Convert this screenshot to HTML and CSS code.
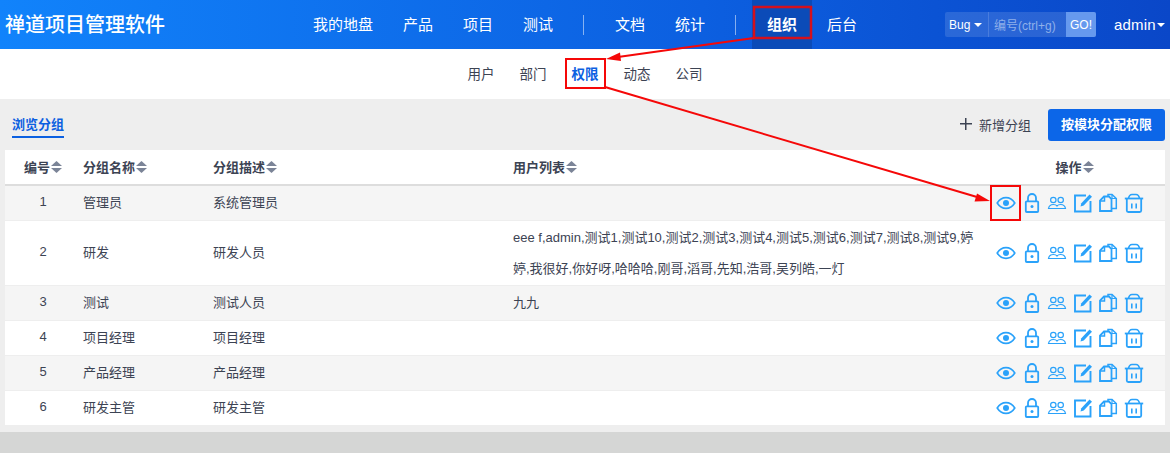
FILE: index.html
```html
<!DOCTYPE html>
<html lang="zh-CN">
<head>
<meta charset="utf-8">
<title>禅道项目管理软件</title>
<link rel="stylesheet" href="styles.css">
</head>
<body>
<svg class="defs" width="0" height="0" aria-hidden="true">
  <defs>
    <symbol id="i-eye" viewBox="0 0 20 20"><path d="M1.200 10C3.500 6.300 6.500 4.600 10 4.600S16.500 6.300 18.800 10C16.500 13.700 13.500 15.400 10 15.400S3.500 13.700 1.200 10Z" fill="none" stroke="currentColor" stroke-width="1.600"/><circle cx="10" cy="10" r="3" fill="currentColor"/></symbol>
    <symbol id="i-lock" viewBox="0 0 20 20"><rect x="3.800" y="8.300" width="12.400" height="10.700" rx="1" fill="none" stroke="currentColor" stroke-width="1.800"/><path d="M6 8.300V5A4 4 0 0 1 14 5V8.300" fill="none" stroke="currentColor" stroke-width="1.800"/><circle cx="10" cy="13.500" r="1.500" fill="currentColor"/></symbol>
    <symbol id="i-users" viewBox="0 0 20 20"><circle cx="6.300" cy="7" r="2.700" fill="none" stroke="currentColor" stroke-width="1.200"/><circle cx="13.700" cy="7" r="2.700" fill="none" stroke="currentColor" stroke-width="1.200"/><path d="M1.500 15.500C2 12.500 3.500 11.500 6.300 11.500C8.500 11.500 9.500 12.200 10 13C10.500 12.200 11.500 11.500 13.700 11.500C16.500 11.500 18 12.500 18.500 15.500Z" fill="none" stroke="currentColor" stroke-width="1.200"/></symbol>
    <symbol id="i-edit" viewBox="0 0 20 20"><path d="M13 2.500H2V18.500H17.500V8" fill="none" stroke="currentColor" stroke-width="1.900"/><path d="M7.500 13.500L8.300 10.300L16.500 1.500L19 3.800L10.700 12.400Z" fill="currentColor"/></symbol>
    <symbol id="i-copy" viewBox="0 0 20 20"><path d="M6 3.500H11L13.500 6V18H2V7.500Z" fill="none" stroke="currentColor" stroke-width="1.800"/><path d="M6.500 3.500V8H2" fill="none" stroke="currentColor" stroke-width="1.500"/><path d="M10 3V1.500H14L18.300 5.500V15.500H14" fill="none" stroke="currentColor" stroke-width="1.500"/><path d="M14 1.500V5.500H18" fill="none" stroke="currentColor" stroke-width="1.200"/></symbol>
    <symbol id="i-trash" viewBox="0 0 20 20"><path d="M.8 5.500H19.200" stroke="currentColor" stroke-width="1.800"/><path d="M4.500 5.500C5 2.800 6.500 1.500 8 1.500H12C13.500 1.500 15 2.800 15.500 5.500" fill="none" stroke="currentColor" stroke-width="1.500"/><path d="M2.800 5.500V17.500C2.800 18.500 3.300 19 4.300 19H15.700C16.700 19 17.200 18.500 17.200 17.500V5.500" fill="none" stroke="currentColor" stroke-width="1.800"/><path d="M7.800 10.500V15.500M12.200 10.500V15.500" stroke="currentColor" stroke-width="1.600"/></symbol>
    <symbol id="i-sort" viewBox="0 0 11 12"><path d="M5.500 0L11 5H0Z" fill="currentColor"/><path d="M5.500 12L0 7H11Z" fill="currentColor"/></symbol>
  </defs>
</svg>

<header class="topbar">
  <div class="brand">禅道项目管理软件</div>
  <nav class="mainnav">
    <a class="nav-item">我的地盘</a>
    <a class="nav-item">产品</a>
    <a class="nav-item">项目</a>
    <a class="nav-item">测试</a>
    <span class="nav-divider"></span>
    <a class="nav-item">文档</a>
    <a class="nav-item">统计</a>
    <span class="nav-divider"></span>
    <a class="nav-item is-active">组织</a>
    <a class="nav-item">后台</a>
  </nav>
  <div class="search">
    <span class="search-type">Bug<i class="caret"></i></span>
    <span class="search-input">编号(ctrl+g)</span>
    <span class="search-go">GO!</span>
  </div>
  <div class="user">admin<i class="caret"></i></div>
</header>

<nav class="subnav">
  <a class="sub-item">用户</a>
  <a class="sub-item">部门</a>
  <a class="sub-item is-active">权限</a>
  <a class="sub-item">动态</a>
  <a class="sub-item">公司</a>
</nav>

<main class="content">
  <div class="toolbar">
    <a class="tab">浏览分组</a>
    <div class="actions">
      <a class="add"><span class="plus"></span>新增分组</a>
      <a class="primary">按模块分配权限</a>
    </div>
  </div>
  <table class="grid">
    <colgroup>
      <col class="c-id"><col class="c-name"><col class="c-desc"><col class="c-users"><col class="c-ops">
    </colgroup>
    <thead>
      <tr>
        <th class="center">编号<svg class="sort"><use href="#i-sort"/></svg></th>
        <th class="name">分组名称<svg class="sort"><use href="#i-sort"/></svg></th>
        <th>分组描述<svg class="sort"><use href="#i-sort"/></svg></th>
        <th>用户列表<svg class="sort"><use href="#i-sort"/></svg></th>
        <th class="ops-head">操作<svg class="sort"><use href="#i-sort"/></svg></th>
      </tr>
    </thead>
    <tbody>
      <tr class="odd">
        <td class="center">1</td><td class="name">管理员</td><td>系统管理员</td><td></td>
        <td><div class="ops"><svg class="ico"><use href="#i-eye"/></svg><svg class="ico"><use href="#i-lock"/></svg><svg class="ico"><use href="#i-users"/></svg><svg class="ico"><use href="#i-edit"/></svg><svg class="ico"><use href="#i-copy"/></svg><svg class="ico"><use href="#i-trash"/></svg></div></td>
      </tr>
      <tr>
        <td class="center">2</td><td class="name">研发</td><td>研发人员</td>
        <td class="users">eee f,admin,测试1,测试10,测试2,测试3,测试4,测试5,测试6,测试7,测试8,测试9,婷婷,我很好,你好呀,哈哈哈,刚哥,滔哥,先知,浩哥,吴列皓,一灯</td>
        <td><div class="ops"><svg class="ico"><use href="#i-eye"/></svg><svg class="ico"><use href="#i-lock"/></svg><svg class="ico"><use href="#i-users"/></svg><svg class="ico"><use href="#i-edit"/></svg><svg class="ico"><use href="#i-copy"/></svg><svg class="ico"><use href="#i-trash"/></svg></div></td>
      </tr>
      <tr class="odd">
        <td class="center">3</td><td class="name">测试</td><td>测试人员</td><td>九九</td>
        <td><div class="ops"><svg class="ico"><use href="#i-eye"/></svg><svg class="ico"><use href="#i-lock"/></svg><svg class="ico"><use href="#i-users"/></svg><svg class="ico"><use href="#i-edit"/></svg><svg class="ico"><use href="#i-copy"/></svg><svg class="ico"><use href="#i-trash"/></svg></div></td>
      </tr>
      <tr>
        <td class="center">4</td><td class="name">项目经理</td><td>项目经理</td><td></td>
        <td><div class="ops"><svg class="ico"><use href="#i-eye"/></svg><svg class="ico"><use href="#i-lock"/></svg><svg class="ico"><use href="#i-users"/></svg><svg class="ico"><use href="#i-edit"/></svg><svg class="ico"><use href="#i-copy"/></svg><svg class="ico"><use href="#i-trash"/></svg></div></td>
      </tr>
      <tr class="odd">
        <td class="center">5</td><td class="name">产品经理</td><td>产品经理</td><td></td>
        <td><div class="ops"><svg class="ico"><use href="#i-eye"/></svg><svg class="ico"><use href="#i-lock"/></svg><svg class="ico"><use href="#i-users"/></svg><svg class="ico"><use href="#i-edit"/></svg><svg class="ico"><use href="#i-copy"/></svg><svg class="ico"><use href="#i-trash"/></svg></div></td>
      </tr>
      <tr>
        <td class="center">6</td><td class="name">研发主管</td><td>研发主管</td><td></td>
        <td><div class="ops"><svg class="ico"><use href="#i-eye"/></svg><svg class="ico"><use href="#i-lock"/></svg><svg class="ico"><use href="#i-users"/></svg><svg class="ico"><use href="#i-edit"/></svg><svg class="ico"><use href="#i-copy"/></svg><svg class="ico"><use href="#i-trash"/></svg></div></td>
      </tr>
    </tbody>
  </table>
</main>
<footer class="footer"></footer>

<svg class="annot" viewBox="0 0 1170 453" aria-hidden="true">
  <g fill="none" stroke="#f50808" stroke-width="2">
    <rect x="754" y="7" width="57" height="31" stroke="#d4101c" stroke-width="2.500"/>
    <rect x="566" y="59" width="39" height="29"/>
    <rect x="991" y="186" width="29" height="34"/>
    <path d="M754 38L618 57"/>
    <path d="M605 87L977 197"/>
  </g>
  <path d="M606 59L620 52.500L621 61Z" fill="#f50808"/>
  <path d="M990 201L974.500 201.500L977 193.500Z" fill="#f50808"/>
</svg>
</body>
</html>
```
FILE: styles.css
```css
* { box-sizing: border-box; }
html, body { margin: 0; padding: 0; }
body {
  position: relative;
  width: 1170px;
  height: 453px;
  overflow: hidden;
  background: #eeeeee;
  color: #3c4353;
  font-family: "Liberation Sans", "Noto Sans CJK SC", sans-serif;
  font-size: 13px;
}
.defs { position: absolute; }

.topbar {
  display: flex;
  align-items: center;
  height: 49px;
  padding-left: 5px;
  color: #fff;
  background: linear-gradient(90deg, #1183fb 0%, #0c5fe0 60%, #0a47c8 100%);
}
.brand { width: 293px; padding-bottom: 2px; font-size: 20px; font-weight: 500; white-space: nowrap; }
.mainnav { display: flex; align-items: stretch; height: 49px; width: 647px; }
.nav-item { display: flex; align-items: center; padding: 0 15px 3px; font-size: 15px; white-space: nowrap; }
.nav-item.is-active { background: #0b4bb8; font-weight: 700; }
.nav-divider { align-self: center; width: 1px; height: 20px; margin: 0 16px 0 15px; background: rgba(255,255,255,.5); }

.search {
  display: flex;
  align-items: stretch;
  width: 151px;
  height: 25px;
  font-size: 12px;
  border-radius: 2px;
  background: rgba(255,255,255,.13);
}
.search-type { display: flex; align-items: center; width: 44px; padding-left: 4px; border-right: 1px solid rgba(255,255,255,.15); }
.search-input { flex: 1; display: flex; align-items: center; padding-left: 5px; color: #8fb0ea; white-space: nowrap; }
.search-go { display: flex; align-items: center; justify-content: center; width: 30px; background: #6699ee; border-radius: 0 2px 2px 0; }
.caret { display: inline-block; width: 0; height: 0; margin-left: 4px; border: 4px solid transparent; border-top-color: currentColor; border-bottom-width: 0; }
.user { margin-left: 18px; font-size: 15px; display: flex; align-items: center; letter-spacing: .2px; }
.user .caret { margin-left: 1px; }

.subnav {
  display: flex;
  justify-content: center;
  align-items: center;
  gap: 25px;
  height: 50px;
  padding: 0 0 3px;
  background: #fff;
}
.sub-item { font-size: 13.500px; color: #3c4353; }
.sub-item.is-active { color: #0c60e1; font-weight: 700; }

.content { height: 333px; padding: 10px 5px 0; }
.toolbar { display: flex; justify-content: space-between; align-items: center; height: 32px; margin-bottom: 9px; }
.tab {
  margin-left: 7px;
  padding: 1px 0 3px;
  color: #0c60e1;
  font-weight: 700;
  font-size: 13px;
  border-bottom: 2px solid #0c60e1;
}
.actions { display: flex; align-items: center; }
.add { display: flex; align-items: center; margin-right: 17px; padding-bottom: 2px; color: #3c4353; }
.plus { position: relative; width: 12px; height: 12px; margin-right: 7px; background: linear-gradient(#3c4353,#3c4353) center/12px 1.500px no-repeat, linear-gradient(#3c4353,#3c4353) center/1.500px 12px no-repeat; }
.primary {
  display: flex;
  align-items: center;
  justify-content: center;
  width: 117px;
  height: 32px;
  padding-bottom: 3px;
  color: #fff;
  font-weight: 700;
  background: #0c66e8;
  border-radius: 3px;
}

.grid { width: 1160px; table-layout: fixed; border-collapse: collapse; background: #fff; }
.c-id { width: 67px; }
.c-name { width: 129px; }
.c-desc { width: 300px; }
.c-users { width: 481px; }
.c-ops { width: 183px; }
.grid th {
  height: 35px;
  padding: 0 0 1px 12px;
  text-align: left;
  font-weight: 700;
  font-size: 13px;
  border-bottom: 2px solid #dddddd;
}
.grid th.center { text-align: center; padding: 0 0 1px 9px; }
.grid th.name { padding-left: 11px; }
.grid th.ops-head { text-align: center; padding: 0 0 1px 2px; }
.sort { width: 11px; height: 12px; margin-left: 1px; vertical-align: -1px; color: #7b8497; }
.grid td { height: 35px; padding: 0 0 2px 12px; border-bottom: 1px solid #eeeeee; font-size: 13px; }
.grid td.center { text-align: center; padding: 0 0 2px 9px; }
.grid td.name { padding-left: 11px; }
.grid td.users { height: 65px; padding: 0 0 0 12px; font-size: 13px; line-height: 31px; word-break: break-all; }
.grid tr.odd td { background: #f5f5f5; }
.ops { display: flex; justify-content: space-between; width: 150px; margin-top: 2px; padding-left: 2px; color: #2aa2fa; }
.ico { width: 20px; height: 20px; flex: none; }

.footer { height: 21px; background: #d5d6d5; }

.annot { position: absolute; left: 0; top: 0; width: 1170px; height: 453px; pointer-events: none; }
```
